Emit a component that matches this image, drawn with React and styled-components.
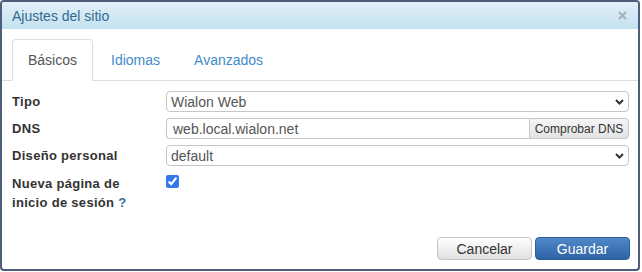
import React from "react";
import styled, { createGlobalStyle } from "styled-components";

const Global = createGlobalStyle`
  body {
    margin: 0;
    background: #fff;
    font-family: "Liberation Sans", Arial, sans-serif;
  }
`;

const Dialog = styled.div`
  width: 640px;
  height: 271px;
  box-sizing: border-box;
  border: 2px solid #4d5d7a;
  border-radius: 4px;
  display: flex;
  flex-direction: column;
  overflow: hidden;
  background: #fff;
`;

const TitleBar = styled.div`
  height: 27px;
  flex-shrink: 0;
  display: flex;
  align-items: center;
  justify-content: space-between;
  padding: 0 11px 0 10px;
  background: linear-gradient(#e2f0f8, #c4e1f0);
  color: #33698f;
  font-size: 14px;
`;

const Close = styled.span`
  display: flex;
  width: 9px;
  height: 9px;
  cursor: pointer;
`;

const TabNav = styled.div`
  display: flex;
  gap: 2px;
  margin-top: 10px;
  padding-left: 10px;
  border-bottom: 1px solid #ddd;
`;

const Tab = styled.div`
  padding: 10px 15px;
  line-height: 20px;
  font-size: 14px;
  border: 1px solid ${(p) => (p.$active ? "#ddd" : "transparent")};
  border-bottom: 1px solid ${(p) => (p.$active ? "#fff" : "transparent")};
  border-radius: 4px 4px 0 0;
  margin-bottom: -1px;
  color: ${(p) => (p.$active ? "#555" : "#428bca")};
  background: ${(p) => (p.$active ? "#fff" : "transparent")};
  cursor: pointer;
`;

const Form = styled.div`
  display: grid;
  grid-template-columns: 154px 1fr;
  row-gap: 6px;
  align-items: center;
  padding: 10px 9px 0 10px;
`;

const Label = styled.div`
  font-weight: bold;
  font-size: 13px;
  line-height: 19px;
  letter-spacing: 0.3px;
  color: #333;
  padding-right: 12px;
  margin-top: ${(p) => (p.$shift ? "2px" : "0")};
  align-self: ${(p) => (p.$shift ? "start" : "center")};
`;

const Help = styled.span`
  color: #2d6e9e;
`;

const SelectBox = styled.div`
  height: 21px;
  box-sizing: border-box;
  display: flex;
  align-items: center;
  justify-content: space-between;
  padding: 0 4px 0 4px;
  border: 1px solid #c6c6c6;
  border-radius: 4px;
  font-size: 14px;
  color: #555;
`;

const Group = styled.div`
  display: flex;
  height: 21px;
`;

const TextInput = styled.div`
  flex: 1;
  box-sizing: border-box;
  display: flex;
  align-items: center;
  padding: 0 6px;
  border: 1px solid #c6c6c6;
  border-right: none;
  border-radius: 4px 0 0 4px;
  font-size: 14px;
  color: #555;
`;

const AddonButton = styled.div`
  width: 100px;
  box-sizing: border-box;
  display: flex;
  align-items: center;
  justify-content: center;
  border: 1px solid #c6c6c6;
  border-radius: 0 4px 4px 0;
  background: linear-gradient(#f6f6f6, #e3e3e3);
  font-size: 12px;
  color: #333;
`;

const Check = styled.input`
  width: 13px;
  height: 13px;
  margin: 3px 0 0 0;
  align-self: start;
  accent-color: #3478f0;
`;

const Footer = styled.div`
  margin-top: auto;
  display: flex;
  justify-content: flex-end;
  gap: 3px;
  padding: 0 8px 9px 0;
`;

const Button = styled.button`
  width: 95px;
  height: 23px;
  box-sizing: border-box;
  border-radius: 4px;
  font-family: inherit;
  font-size: 14px;
  padding: 0;
  cursor: pointer;
  border: 1px solid ${(p) => (p.$primary ? "#2b5f9e" : "#c5c5c5")};
  color: ${(p) => (p.$primary ? "#fff" : "#333")};
  background: ${(p) =>
    p.$primary
      ? "linear-gradient(#4f88c8, #2e63a5)"
      : "linear-gradient(#ffffff, #e0e0e0)"};
`;

function Chevron() {
  return (
    <svg width="9" height="6" viewBox="0 0 9 6">
      <path d="M1 1 L4.5 4.5 L8 1" fill="none" stroke="#333" strokeWidth="2" />
    </svg>
  );
}

export default function App() {
  return (
    <>
      <Global />
      <Dialog>
        <TitleBar>
          <span>Ajustes del sitio</span>
          <Close>
            <svg width="9" height="9" viewBox="0 0 9 9">
              <path d="M1 1 L8 8 M8 1 L1 8" stroke="#a9b3bb" strokeWidth="2.4" />
            </svg>
          </Close>
        </TitleBar>

        <TabNav>
          <Tab $active>Básicos</Tab>
          <Tab>Idiomas</Tab>
          <Tab>Avanzados</Tab>
        </TabNav>

        <Form>
          <Label>Tipo</Label>
          <SelectBox>
            <span>Wialon Web</span>
            <Chevron />
          </SelectBox>

          <Label>DNS</Label>
          <Group>
            <TextInput>web.local.wialon.net</TextInput>
            <AddonButton>Comprobar DNS</AddonButton>
          </Group>

          <Label>Diseño personal</Label>
          <SelectBox>
            <span>default</span>
            <Chevron />
          </SelectBox>

          <Label $shift>
            Nueva página de inicio de sesión <Help>?</Help>
          </Label>
          <Check type="checkbox" defaultChecked />
        </Form>

        <Footer>
          <Button>Cancelar</Button>
          <Button $primary>Guardar</Button>
        </Footer>
      </Dialog>
    </>
  );
}
